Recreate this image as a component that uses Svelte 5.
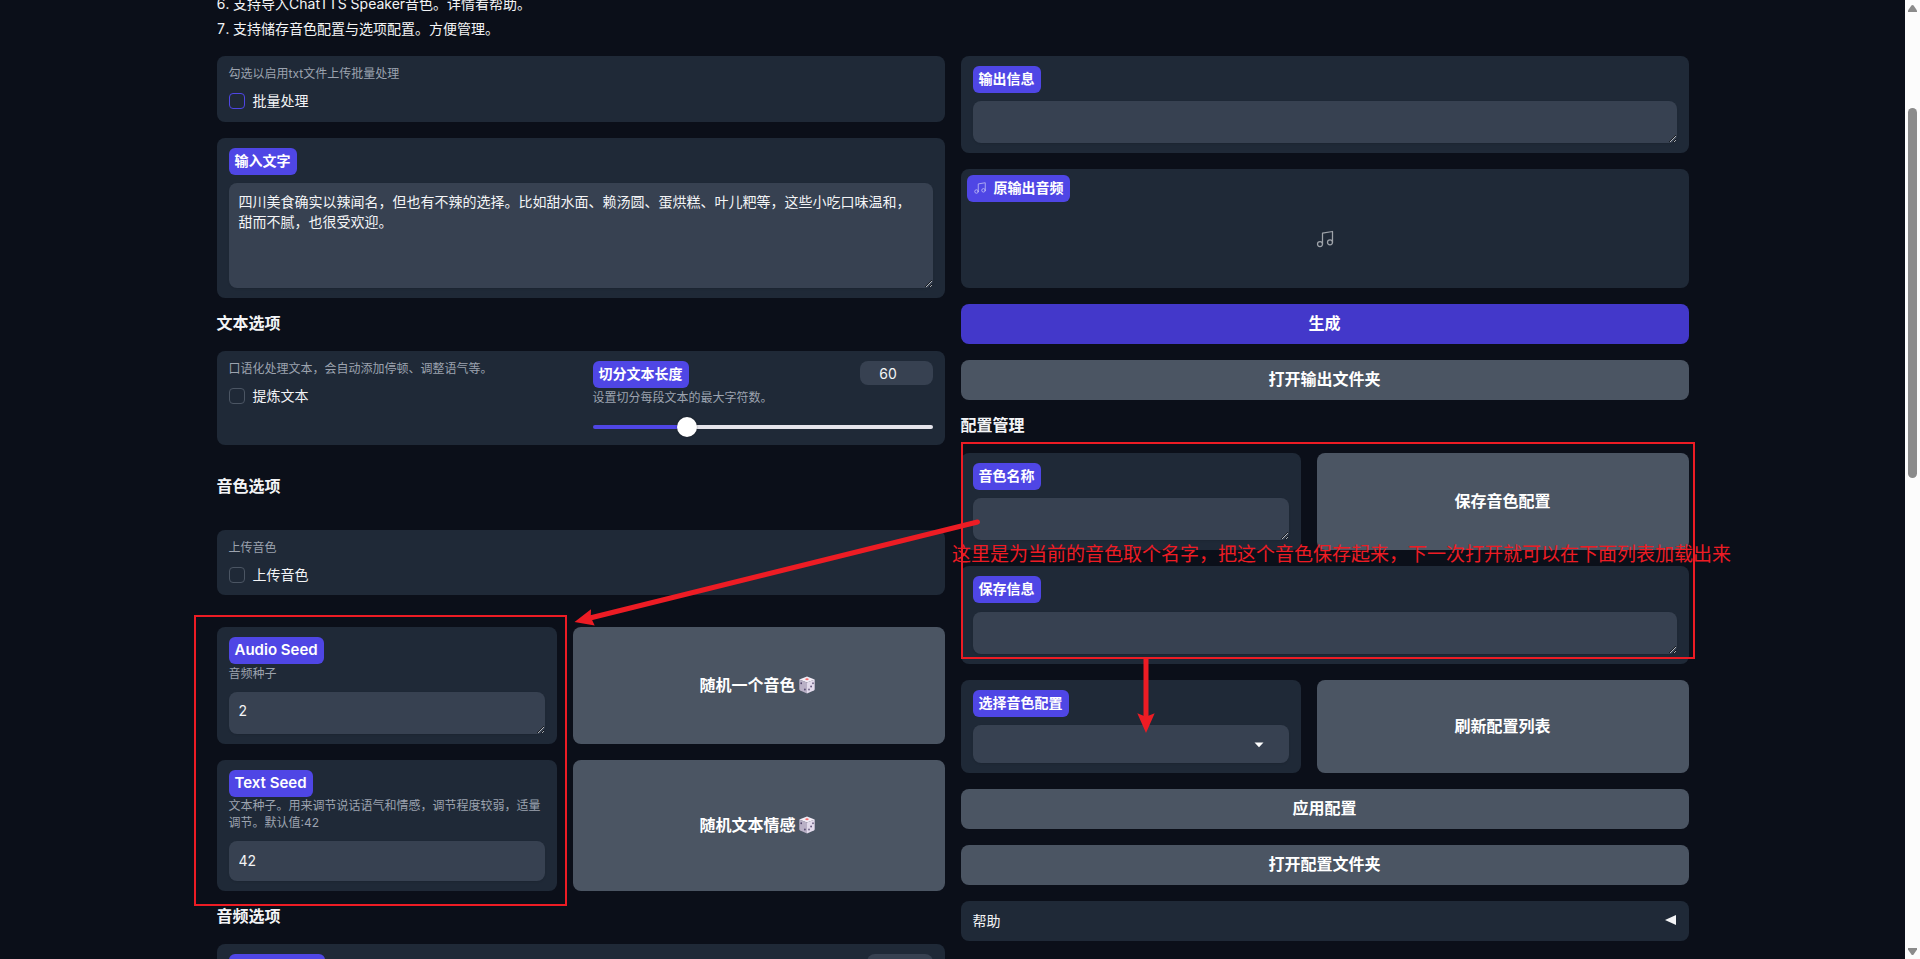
<script lang="ts">
  let batch = $state(false);
  let refine = $state(false);
  let upload = $state(false);
  let text = $state('四川美食确实以辣闻名，但也有不辣的选择。比如甜水面、赖汤圆、蛋烘糕、叶儿粑等，这些小吃口味温和，甜而不腻，也很受欢迎。');
  let audioSeed = $state('2');
  let textSeed = $state('42');
  const min = 10;
  const max = 200;
  let splitLength = $state(60);
  let fraction = $derived((splitLength - min) / (max - min));
</script>

{#snippet music(size)}
  <svg class="music" width={size} height={size} viewBox="0 0 24 24" fill="none" stroke="currentColor" stroke-width="1.5" stroke-linecap="round" stroke-linejoin="round" aria-hidden="true">
    <path d="M9 18V5l12-2v13" />
    <circle cx="6" cy="18" r="3" />
    <circle cx="18" cy="16" r="3" />
  </svg>
{/snippet}

{#snippet dice()}
  <svg width="22" height="18" viewBox="0 0 22 18" aria-hidden="true">
    <path d="M11 .6 18.7 3.4 11 6.6 3.3 3.4Z" fill="#f3eef8" />
    <path d="M3.3 3.4 11 6.6V17.4L4.2 14.6Q3.3 14.2 3.3 13.2Z" fill="#b9b0c6" />
    <path d="M18.7 3.4 11 6.6V17.4L17.8 14.6Q18.7 14.2 18.7 13.2Z" fill="#e2daeb" />
    <ellipse cx="11" cy="3.3" rx="1.7" ry="1" fill="#f8706f" />
    <g fill="#483b63">
      <ellipse cx="5.2" cy="7.3" rx=".8" ry="1" />
      <ellipse cx="8.9" cy="13.5" rx=".8" ry="1" />
      <ellipse cx="17" cy="7.2" rx=".7" ry="1" />
      <ellipse cx="15.1" cy="10.4" rx=".8" ry="1" />
      <ellipse cx="13" cy="13.6" rx=".7" ry="1" />
    </g>
  </svg>
{/snippet}

<div class="app">
  <main class="page">
    <div class="content">
      <ol class="notes" start="6">
        <li>支持导入ChatTTS Speaker音色。详情看帮助。</li>
        <li>支持储存音色配置与选项配置。方便管理。</li>
      </ol>

      <div class="columns">
        <section class="column">
          <div class="card batch">
            <span class="info lead">勾选以启用txt文件上传批量处理</span>
            <label class="check"><input class="accent" type="checkbox" bind:checked={batch} />批量处理</label>
          </div>

          <div class="card">
            <label class="badge" for="input-text">输入文字</label>
            <textarea id="input-text" class="field tall" bind:value={text}></textarea>
          </div>

          <h2>文本选项</h2>

          <div class="card split">
            <div class="stack">
              <span class="info lead">口语化处理文本，会自动添加停顿、调整语气等。</span>
              <label class="check"><input type="checkbox" bind:checked={refine} />提炼文本</label>
            </div>
            <div class="stack">
              <div class="slider-head">
                <label class="badge" for="split-length">切分文本长度</label>
                <input class="number" type="number" aria-label="切分文本长度" {min} {max} bind:value={splitLength} />
              </div>
              <span class="info below">设置切分每段文本的最大字符数。</span>
              <input id="split-length" class="slider" type="range" {min} {max} bind:value={splitLength} style="--fraction: {fraction}" />
            </div>
          </div>

          <h2 class="spaced">音色选项</h2>

          <div class="card last-of-group">
            <span class="info lead">上传音色</span>
            <label class="check"><input type="checkbox" bind:checked={upload} />上传音色</label>
          </div>

          <div class="pair">
            <div class="card">
              <label class="badge latin" for="audio-seed">Audio Seed</label>
              <span class="info below">音频种子</span>
              <textarea id="audio-seed" class="field" rows="1" bind:value={audioSeed}></textarea>
            </div>
            <button class="button" type="button">随机一个音色{@render dice()}</button>
          </div>

          <div class="pair">
            <div class="card">
              <label class="badge latin" for="text-seed">Text Seed</label>
              <span class="info">文本种子。用来调节说话语气和情感，调节程度较弱，适量调节。默认值:42</span>
              <input id="text-seed" class="field line" type="text" bind:value={textSeed} />
            </div>
            <button class="button" type="button">随机文本情感{@render dice()}</button>
          </div>

          <h2>音频选项</h2>

          <div class="card">
            <div class="slider-head">
              <span class="badge blank"></span>
              <span class="number narrow"></span>
            </div>
          </div>
        </section>

        <section class="column">
          <div class="card">
            <label class="badge" for="output-info">输出信息</label>
            <textarea id="output-info" class="field" rows="1"></textarea>
          </div>

          <div class="card audio">
            <span class="badge with-icon">{@render music(14)}原输出音频</span>
            <div class="empty">{@render music(20)}</div>
          </div>

          <button class="button primary" type="button">生成</button>
          <button class="button" type="button">打开输出文件夹</button>

          <h2>配置管理</h2>

          <div class="pair">
            <div class="card">
              <label class="badge" for="voice-name">音色名称</label>
              <textarea id="voice-name" class="field" rows="1"></textarea>
            </div>
            <button class="button" type="button">保存音色配置</button>
          </div>

          <div class="card roomy">
            <label class="badge" for="save-info">保存信息</label>
            <textarea id="save-info" class="field" rows="1"></textarea>
          </div>

          <div class="pair">
            <div class="card">
              <label class="badge" for="voice-config">选择音色配置</label>
              <div class="select-wrap">
                <select id="voice-config" class="field"><option value=""></option></select>
                <svg width="10" height="6" viewBox="0 0 10 6" aria-hidden="true"><path d="M.5.5h9L5 5.3Z" fill="#fff" /></svg>
              </div>
            </div>
            <button class="button" type="button">刷新配置列表</button>
          </div>

          <button class="button" type="button">应用配置</button>
          <button class="button" type="button">打开配置文件夹</button>

          <button class="accordion" type="button" aria-expanded="false">
            帮助
            <svg width="12" height="10" viewBox="0 0 12 10" aria-hidden="true"><path d="M0 5 11 0V10Z" fill="#f3f4f6" /></svg>
          </button>
        </section>
      </div>
    </div>

    <!-- Red mark-up drawn over the form -->
    <svg class="marks" aria-hidden="true">
      <g fill="none" stroke="#ed1c24">
        <rect x="195" y="616" width="371" height="289" stroke-width="2" />
        <rect x="962" y="443" width="732" height="215" stroke-width="2" />
        <path d="M977.5 522 590 618" stroke-width="5" stroke-linecap="round" />
        <path d="M1146 659V718" stroke-width="5" />
      </g>
      <g fill="#ed1c24">
        <path d="M574.5 622 591 609.3 590.8 616 592.3 620.5 594.7 625.4Z" />
        <path d="M1146 733 1137.3 713.3 1143.5 715.8H1148.5L1154.7 713.3Z" />
      </g>
    </svg>
    <p class="remark">这里是为当前的音色取个名字，把这个音色保存起来，下一次打开就可以在下面列表加载出来</p>
  </main>

  <div class="scrollbar" aria-hidden="true">
    <svg width="9" height="7" viewBox="0 0 9 7"><path d="M0 7V5.6L3.4.6Q4.5-.4 5.6.6L9 5.6V7Z" fill="#8b8b8b" /></svg>
    <div class="track"><div class="thumb"></div></div>
    <svg width="9" height="7" viewBox="0 0 9 7"><path d="M0 0V1.4L3.4 6.4Q4.5 7.4 5.6 6.4L9 1.4V0Z" fill="#8b8b8b" /></svg>
  </div>
</div>

<style>
  :global(body) {
    margin: 0;
    background: #0b0f19;
  }
  .app,
  .app * {
    box-sizing: border-box;
  }
  .app {
    display: flex;
    height: 100vh;
    overflow: hidden;
    color: #f3f4f6;
    font-family: Inter, 'Noto Sans CJK SC', sans-serif;
    font-size: 14px;
    line-height: 21px;
  }
  button,
  input,
  select,
  textarea {
    font-family: inherit;
    color: inherit;
  }
  .page {
    position: relative;
    flex: 1;
    min-width: 0;
    overflow: hidden;
  }
  .content {
    max-width: 1536px;
    margin: 0 auto;
    padding: 0 32px;
  }
  /* The page is scrolled so that line 6 sits half above the top edge */
  .notes {
    display: flex;
    flex-direction: column;
    gap: 4px;
    margin: -7px 0 17px;
    padding: 0;
    list-style-position: inside;
  }
  .columns {
    display: grid;
    grid-template-columns: repeat(2, minmax(0, 1fr));
    align-items: start;
    gap: 16px;
  }
  .column {
    display: flex;
    flex-direction: column;
    gap: 16px;
  }
  .card,
  .stack {
    display: flex;
    flex-direction: column;
    align-items: flex-start;
  }
  .card {
    padding: 10px 12px;
    border-radius: 8px;
    background: #1f2937;
  }
  .batch {
    min-height: 66px;
  }
  .roomy {
    gap: 1px;
  }
  .split {
    flex-direction: row;
    gap: 24px;
  }
  .stack {
    flex: 1;
  }
  .last-of-group {
    margin-bottom: 16px;
  }
  .pair {
    display: grid;
    grid-template-columns: minmax(0, 85fr) minmax(0, 93fr);
    gap: 16px;
  }
  h2 {
    margin: 0;
    padding-bottom: 2px;
    font-size: 16px;
    line-height: 19px;
    font-weight: 600;
  }
  .spaced {
    margin: 16px 0;
  }
  .badge {
    padding: 2px 6px 4px;
    border-radius: 6px;
    background: #4f46e5;
    color: #fff;
    font-weight: 600;
  }
  .latin {
    font-size: 15px;
  }
  .with-icon {
    display: flex;
    align-items: center;
    gap: 7px;
  }
  .blank {
    width: 96px;
    height: 27px;
  }
  .info {
    color: #9ca3af;
    font-size: 12px;
    line-height: 17px;
  }
  .lead {
    line-height: 16px;
  }
  .below {
    margin-top: 1px;
  }
  .info + .field {
    margin-top: 10px;
  }
  .check {
    display: flex;
    align-items: center;
    gap: 8px;
    margin-top: 8px;
  }
  .check input {
    appearance: none;
    width: 16px;
    height: 16px;
    margin: 0;
    border: 1px solid #4b5563;
    border-radius: 4px;
    background: #1f2937;
  }
  .check .accent {
    border-color: #4f46e5;
  }
  .check input:checked {
    background: #4f46e5;
  }
  .field {
    display: block;
    width: 100%;
    height: 42px;
    margin: 8px 0 0;
    padding: 9px 10px;
    border: 0;
    border-radius: 8px;
    outline: 0;
    background: #374151;
    font-size: 14px;
    line-height: 20px;
    box-shadow: 0 1px 2px rgba(0, 0, 0, 0.1);
    resize: vertical;
  }
  .tall {
    height: 105px;
  }
  .line {
    height: 40px;
    padding: 8px 10px 10px;
  }
  .slider-head {
    display: flex;
    justify-content: space-between;
    align-items: flex-start;
    align-self: stretch;
  }
  .number {
    appearance: textfield;
    width: 73px;
    height: 24px;
    padding: 0 16px 0 0;
    border: 0;
    border-radius: 8px;
    background: #374151;
    font-size: 14px;
    text-align: center;
  }
  .number::-webkit-inner-spin-button {
    display: none;
  }
  .narrow {
    width: 66px;
  }
  .slider {
    appearance: none;
    width: 100%;
    height: 4px;
    margin: 19px 0 6px;
    border-radius: 2px;
    background: linear-gradient(#4f46e5, #4f46e5) 0 0 / calc(10px + (100% - 20px) * var(--fraction)) 100% no-repeat #e5e4eb;
  }
  .slider::-webkit-slider-thumb {
    appearance: none;
    width: 20px;
    height: 20px;
    border-radius: 50%;
    background: #fff;
    box-shadow: 0 0 2px rgba(0, 0, 0, 0.4);
  }
  .audio {
    padding: 6px 6px 13px;
  }
  .music {
    opacity: 0.6;
  }
  .empty {
    display: flex;
    align-items: center;
    justify-content: center;
    align-self: stretch;
    height: 73px;
  }
  .button {
    display: flex;
    align-items: center;
    justify-content: center;
    min-height: 40px;
    padding: 7px 16px 9px;
    border: 0;
    border-radius: 8px;
    background: #4b5563;
    color: #fff;
    font-size: 16px;
    line-height: 24px;
    font-weight: 600;
  }
  .primary {
    background: #4338ca;
  }
  .select-wrap {
    display: flex;
    align-items: center;
    align-self: stretch;
    margin-top: 8px;
  }
  .select-wrap .field {
    appearance: none;
    height: 38px;
    margin: 0;
  }
  .select-wrap svg {
    flex: none;
    margin: 2px 25px 0 -35px;
    pointer-events: none;
  }
  .accordion {
    display: flex;
    align-items: center;
    justify-content: space-between;
    height: 40px;
    padding: 0 12px 2px;
    border: 0;
    border-radius: 8px;
    background: #1f2937;
    font-size: 14px;
  }
  .marks {
    position: absolute;
    top: 0;
    left: 0;
    width: 100%;
    height: 100%;
    pointer-events: none;
  }
  .remark {
    position: absolute;
    top: 541px;
    left: 952px;
    margin: 0;
    color: #ed1c24;
    font-size: 19px;
    line-height: 28px;
    white-space: nowrap;
    pointer-events: none;
  }
  .scrollbar {
    display: flex;
    flex-direction: column;
    align-items: center;
    width: 15px;
    padding: 5px 0 4px;
    background: #fcfcfc;
  }
  .track {
    flex: 1;
    padding-top: 96px;
  }
  .thumb {
    width: 9px;
    height: 44%;
    border-radius: 5px;
    background: #8b8b8b;
  }
</style>
